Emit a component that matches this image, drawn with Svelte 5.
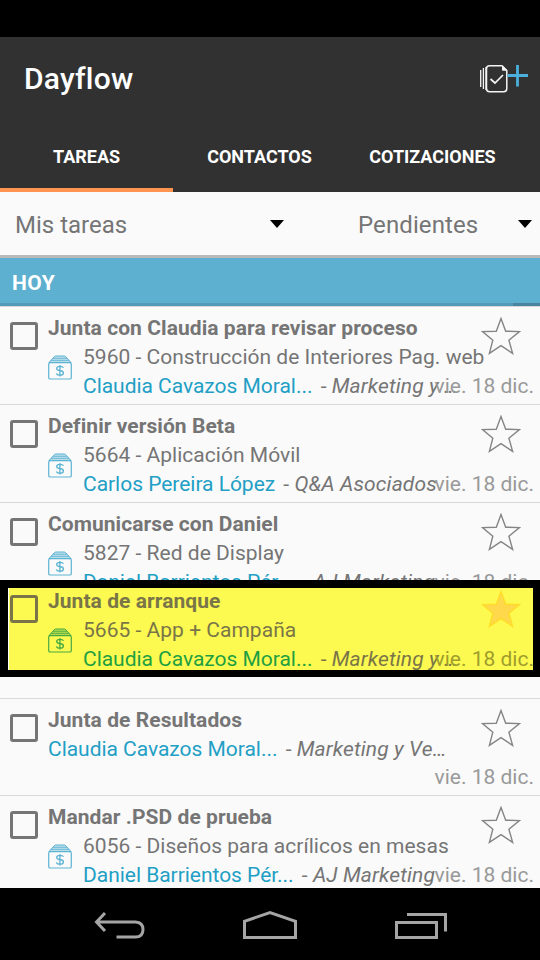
<script>
  const tabs = ["TAREAS", "CONTACTOS", "COTIZACIONES"];
  let activeTab = "TAREAS";

  const tasks = [
    {
      title: "Junta con Claudia para revisar proceso",
      project: "5960 - Construcción de Interiores Pag. web",
      contact: "Claudia Cavazos Moral...",
      company: "Marketing y …",
    },
    {
      title: "Definir versión Beta",
      project: "5664 - Aplicación Móvil",
      contact: "Carlos Pereira López",
      company: "Q&A Asociados",
    },
    {
      title: "Comunicarse con Daniel",
      project: "5827 - Red de Display",
      contact: "Daniel Barrientos Pér...",
      company: "AJ Marketing",
      kind: "cut",
    },
    {
      title: "Junta de arranque",
      project: "5665 - App + Campaña",
      contact: "Claudia Cavazos Moral...",
      company: "Marketing y …",
      kind: "marked",
      starred: true,
    },
    {
      title: "Junta de Resultados",
      contact: "Claudia Cavazos Moral...",
      company: "Marketing y Ve…",
      kind: "short",
    },
    {
      title: "Mandar .PSD de prueba",
      project: "6056 - Diseños para acrílicos en mesas",
      contact: "Daniel Barrientos Pér...",
      company: "AJ Marketing",
      kind: "last",
    },
  ];
</script>

<div class="screen">
  <div class="status-bar"></div>

  <header>
    <div class="title-bar">
      <h1>Dayflow</h1>
      <button class="add" aria-label="Nueva tarea">
        <svg width="50" height="32" viewBox="0 0 50 32" fill="none">
          <g stroke="#f4f4f4">
            <path d="M2.7 8v17M5.4 6v21" stroke-width="1.3" />
            <path d="M7.6 5v23" stroke="#bbb" stroke-width="1.2" />
            <path
              d="M11.5 3.7H24L28.8 8.5V26.5Q28.8 29.7 25.8 29.7H11.5Q8.5 29.7 8.5 26.5V6.7Q8.5 3.7 11.5 3.7Z"
              stroke-width="1.5"
            />
            <path d="M24.5 4V8.2H28.5Z" fill="#f4f4f4" stroke-width="1" />
            <path d="M12.5 17l4.5 4 8-8" stroke-width="1.7" />
          </g>
          <path d="M29.5 13.5H50M39.5 3v21.5" stroke="#4bb0db" stroke-width="2.8" />
        </svg>
      </button>
    </div>
    <nav>
      {#each tabs as tab}
        <button
          class="tab"
          class:active={tab === activeTab}
          on:click={() => (activeTab = tab)}
        >
          {tab}
        </button>
      {/each}
    </nav>
  </header>

  <div class="filters">
    <div class="filter owner"><span>Mis tareas</span><i class="caret"></i></div>
    <div class="filter state"><span>Pendientes</span><i class="caret"></i></div>
  </div>

  <div class="section"><span>HOY</span></div>

  <main>
    {#each tasks as task}
      <div class="task {task.kind || ''}">
        <div class="row">
          <span class="checkbox"></span>
          <div class="info">
            <div class="name">{task.title}</div>
            <div class="details">
              {#if task.project}
                <svg class="money" width="24" height="25" viewBox="0 0 24 25" fill="none" stroke="currentColor">
                  <path class="flap" d="M1 7.5L6.5 1.5Q7 1 8 1H16Q17 1 17.5 1.5L23 7.5Z" stroke-width="1" />
                  <path d="M5 3.3H19M3 5.4H21" stroke-width=".8" />
                  <rect x=".7" y="7.6" width="22.6" height="16.4" rx="1.6" stroke-width="1.2" />
                  <path
                    d="M15.5 12.7Q14.8 11.4 12 11.4Q8.7 11.4 8.7 13.4Q8.7 15.1 12 15.5Q15.4 16 15.4 18Q15.4 20.2 12 20.2Q9 20.2 8.3 18.4M11.9 9.9V21.6"
                    stroke-width="1.3"
                  />
                </svg>
              {/if}
              <div>
                {#if task.project}<div class="line project">{task.project}</div>{/if}
                <div class="line">
                  <span class="contact">{task.contact}</span>
                  <span class="dash">-</span>
                  <em>{task.company}</em>
                </div>
              </div>
            </div>
          </div>
          <svg class="star" class:on={task.starred} width="40" height="38" viewBox="0 0 40 38">
            <path
              d="M20 1.5L24.7 14.2L38.5 14.6L27.9 23.2L31.6 36.4L20 28.6L8.4 36.4L11.8 23.2L1.5 14.6L15.3 14.2Z"
            />
          </svg>
          <span class="date">vie. 18 dic.</span>
        </div>
      </div>
    {/each}
  </main>

  <footer>
    <svg width="54" height="32" viewBox="0 0 54 32">
      <path d="M13 3L4.5 12L13 21M5 12H43.5Q51 12.5 51 19.5Q51 27 43.5 27H24.5" />
    </svg>
    <svg width="56" height="32" viewBox="0 0 56 32">
      <path d="M2.5 27.5V11.3L28 2.5L53.5 11.3V27.5Z" />
    </svg>
    <svg width="54" height="32" viewBox="0 0 54 32">
      <path d="M2.5 12.5H42.5V27.5H2.5ZM13 4.5H51.5V21.5" />
    </svg>
  </footer>
</div>

<style>
  :global(body) {
    margin: 0;
    background: #000;
  }

  .screen {
    display: flex;
    flex-direction: column;
    width: 540px;
    height: 960px;
    overflow: hidden;
    background: #fafafa;
    font-family: Roboto, "Liberation Sans", sans-serif;
    color: #757575;
  }

  button {
    padding: 0;
    border: 0;
    background: none;
    font-family: inherit;
  }

  .status-bar {
    height: 37px;
    background: #000;
  }

  header {
    height: 155px;
    background: #313131;
  }

  .title-bar {
    display: flex;
    align-items: center;
    justify-content: space-between;
    height: 82px;
    padding: 0 12px 0 24px;
  }

  h1 {
    margin: 0;
    color: #fff;
    font-size: 30px;
    font-weight: 500;
    letter-spacing: 0.2px;
  }

  .add svg {
    display: block;
  }

  nav {
    display: grid;
    grid-template-columns: repeat(3, 173px);
    height: 73px;
  }

  .tab {
    box-sizing: border-box;
    padding-top: 6px;
    border-bottom: 4px solid transparent;
    color: #fff;
    font-size: 18px;
    font-weight: 700;
  }

  .tab.active {
    border-color: #ff9550;
  }

  .filters {
    display: flex;
    height: 63px;
    border-bottom: 3px solid #bababa;
    font-size: 24px;
  }

  .filter {
    display: flex;
    align-items: center;
    justify-content: space-between;
    box-sizing: border-box;
    padding-top: 2px;
  }

  .owner {
    width: 284px;
    padding-left: 15px;
  }

  .state {
    width: 248px;
    padding-left: 74px;
    letter-spacing: 0.1px;
  }

  .caret {
    border: 7px solid transparent;
    border-top: 8px solid #000;
    border-bottom: 0;
    margin-top: -2px;
  }

  .section {
    box-sizing: border-box;
    height: 48px;
    padding-left: 12px;
    background:
      linear-gradient(90deg, #529ab8 513px, #4a849e 513px) bottom / 100% 3px no-repeat,
      #5eb0d0;
    color: #fff;
    font-size: 21px;
    font-weight: 700;
    letter-spacing: 0.4px;
    line-height: 50px;
  }

  .task {
    box-sizing: border-box;
    height: 98px;
    border-top: 1px solid #d9d9d9;
    overflow: hidden;
  }

  .row {
    position: relative;
    display: flex;
    width: 540px;
    height: 97px;
  }

  .cut {
    height: 78px;
  }

  .short {
    height: 97px;
    margin-top: 21px;
  }

  .last {
    height: 93px;
  }

  .marked {
    height: 97px;
    border: solid #000;
    border-width: 8px 7px 7px 8px;
    background: #fcfa50;
    box-shadow: inset 1px 0 #fff;
    color: #7a7548;
  }

  .marked .row {
    margin: -8px 0 0 -8px;
  }

  .checkbox {
    flex: none;
    box-sizing: border-box;
    width: 28px;
    height: 28px;
    margin: 15px 10px 0;
    border: 3px solid currentColor;
    border-radius: 3px;
  }

  .info {
    padding-top: 7px;
    font-size: 21px;
    line-height: 29px;
    white-space: nowrap;
  }

  .name {
    font-weight: 700;
    letter-spacing: 0.06px;
  }

  .project {
    letter-spacing: 0.02px;
  }

  .details {
    display: flex;
  }

  .money {
    flex: none;
    margin: 12px 11px 0 0;
    color: #5cb3d2;
  }

  .flap {
    fill: currentColor;
    fill-opacity: 0.4;
  }

  .contact {
    color: #229fc5;
    letter-spacing: -0.03px;
  }

  .dash {
    margin-left: 3px;
  }

  em {
    letter-spacing: 0.12px;
  }

  .marked .money {
    color: #46a944;
  }

  .marked .contact {
    color: #1e9f42;
  }

  .star {
    position: absolute;
    top: 10px;
    left: 481px;
    fill: none;
    stroke: #858585;
    stroke-width: 1.4;
  }

  .star.on {
    fill: #ffd84c;
    stroke: #ffdc28;
  }

  .date {
    position: absolute;
    top: 65px;
    right: 6px;
    color: #999;
    font-size: 21px;
    line-height: 29px;
    white-space: nowrap;
  }

  .short .date {
    top: 64px;
  }

  .marked .date {
    color: #a09d2c;
  }

  footer {
    display: flex;
    justify-content: space-between;
    align-items: center;
    box-sizing: border-box;
    height: 72px;
    padding: 4px 92px 0;
    background: #000;
  }

  footer svg {
    fill: none;
    stroke: #a5a5a5;
    stroke-width: 3;
  }
</style>
